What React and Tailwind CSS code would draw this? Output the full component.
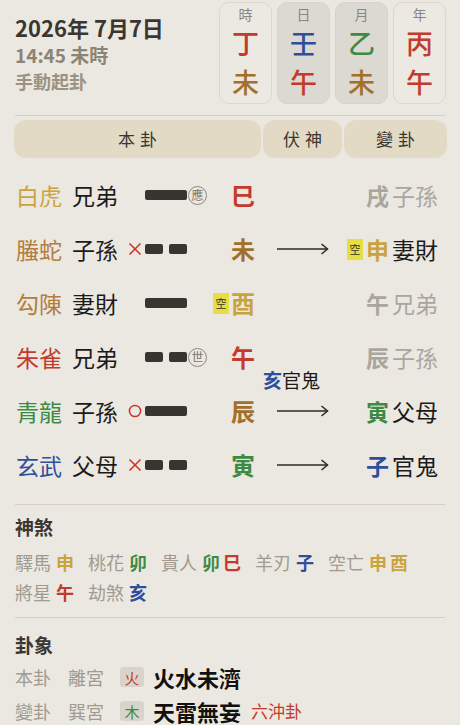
import React from "react";

const RED = "text-[#c23b2c]";
const BLUE = "text-[#2e4f9b]";
const GREEN = "text-[#3d8a43]";
const BROWN = "text-[#a2702a]";
const BROWN_L = "text-[#b27d3e]";
const GOLD = "text-[#c9a43c]";
const GRAY = "text-[#aaa69f]";

const pillars = [
  { label: "時", stem: "丁", stemColor: RED, branch: "未", branchColor: BROWN, dark: false },
  { label: "日", stem: "壬", stemColor: BLUE, branch: "午", branchColor: RED, dark: true },
  { label: "月", stem: "乙", stemColor: GREEN, branch: "未", branchColor: BROWN, dark: true },
  { label: "年", stem: "丙", stemColor: RED, branch: "午", branchColor: RED, dark: false },
];

const lines = [
  { god: "白虎", godColor: GOLD, rel: "兄弟", move: null, yang: true, mark: "應", branch: "巳", branchColor: RED, arrow: false, chg: { branch: "戌", rel: "子孫", gray: true } },
  { god: "螣蛇", godColor: BROWN_L, rel: "子孫", move: "x", yang: false, branch: "未", branchColor: BROWN, arrow: true, chg: { empty: true, branch: "申", color: GOLD, rel: "妻財" } },
  { god: "勾陳", godColor: BROWN_L, rel: "妻財", move: null, yang: true, empty: true, branch: "酉", branchColor: GOLD, arrow: false, chg: { branch: "午", rel: "兄弟", gray: true } },
  { god: "朱雀", godColor: RED, rel: "兄弟", move: null, yang: false, mark: "世", branch: "午", branchColor: RED, arrow: false, chg: { branch: "辰", rel: "子孫", gray: true } },
  { god: "青龍", godColor: GREEN, rel: "子孫", move: "o", yang: true, branch: "辰", branchColor: BROWN, fu: { branch: "亥", rel: "官鬼" }, arrow: true, chg: { branch: "寅", color: GREEN, rel: "父母" } },
  { god: "玄武", godColor: BLUE, rel: "父母", move: "x", yang: false, branch: "寅", branchColor: GREEN, arrow: true, chg: { branch: "子", color: BLUE, rel: "官鬼" } },
];

const shensha = [
  [
    { label: "驛馬", vals: [["申", GOLD]] },
    { label: "桃花", vals: [["卯", GREEN]] },
    { label: "貴人", vals: [["卯", GREEN], ["巳", RED]] },
    { label: "羊刃", vals: [["子", BLUE]] },
    { label: "空亡", vals: [["申", GOLD], ["酉", GOLD]] },
  ],
  [
    { label: "將星", vals: [["午", RED]] },
    { label: "劫煞", vals: [["亥", BLUE]] },
  ],
];

const EmptyBadge = () => (
  <span className="w-[16px] h-[21px] bg-[#e6de46] text-[11px] leading-none text-[#34321c] flex items-center justify-center">
    空
  </span>
);

const Arrow = () => (
  <svg width="52" height="12" viewBox="0 0 52 12" fill="none">
    <line x1="0" y1="6" x2="50.5" y2="6" stroke="#2b2926" strokeWidth="1.5" />
    <polyline points="44.5,1 50.5,6 44.5,11" stroke="#2b2926" strokeWidth="1.5" fill="none" />
  </svg>
);

const MoveMark = ({ type }) => {
  if (type === "x")
    return (
      <svg width="14" height="14" viewBox="0 0 14 14">
        <line x1="1.5" y1="1.5" x2="12.5" y2="12.5" stroke="#c8372c" strokeWidth="1.6" />
        <line x1="12.5" y1="1.5" x2="1.5" y2="12.5" stroke="#c8372c" strokeWidth="1.6" />
      </svg>
    );
  if (type === "o")
    return (
      <svg width="14" height="14" viewBox="0 0 14 14">
        <circle cx="7" cy="7" r="5.6" stroke="#c8372c" strokeWidth="1.5" fill="none" />
      </svg>
    );
  return null;
};

const LineRow = ({ l }) => (
  <div className="grid grid-cols-[247px_79px_103px] gap-x-[2px] h-[54px] items-center">
    <div className="flex items-center">
      <span className={`w-[58px] pl-[2px] text-[23px] leading-none ${l.godColor}`}>{l.god}</span>
      <span className="w-[52px] text-[23px] leading-none text-[#1c1b1a]">{l.rel}</span>
      <span className="w-[21px] flex justify-center items-center">
        <MoveMark type={l.move} />
      </span>
      <span className="w-[42px] h-[10px] flex justify-between">
        {l.yang ? (
          <span className="w-full h-full rounded-[2px] bg-[#38342f]" />
        ) : (
          <>
            <span className="w-[18px] h-full rounded-[2px] bg-[#38342f]" />
            <span className="w-[18px] h-full rounded-[2px] bg-[#38342f]" />
          </>
        )}
      </span>
      <span className="ml-[1px] w-[20px] flex items-center">
        {l.mark && (
          <span className="w-[19px] h-[19px] shrink-0 rounded-full border border-[#8d877e] text-[12px] leading-none text-[#7d776e] flex items-center justify-center">
            {l.mark}
          </span>
        )}
      </span>
      <span className="w-[47px] flex justify-end items-center gap-[2px]">
        {l.empty && <EmptyBadge />}
        <span className={`text-[24px] leading-none font-bold ${l.branchColor}`}>{l.branch}</span>
      </span>
    </div>
    <div className="relative h-full flex items-center justify-center">
      {l.arrow && <Arrow />}
      {l.fu && (
        <span className="absolute left-0 top-[-16px] text-[19px] leading-[24px] whitespace-nowrap">
          <span className={`font-semibold ${BLUE}`}>{l.fu.branch}</span>
          <span className="text-[#1c1b1a]">{l.fu.rel}</span>
        </span>
      )}
    </div>
    <div className="flex justify-end items-center gap-[3px] pr-[9px]">
      {l.chg.empty && <EmptyBadge />}
      <span className={`text-[23px] leading-none font-bold ${l.chg.gray ? GRAY : l.chg.color}`}>{l.chg.branch}</span>
      <span className={`text-[23px] leading-none ${l.chg.gray ? GRAY : "text-[#1c1b1a]"}`}>{l.chg.rel}</span>
    </div>
  </div>
);

const App = () => {
  return (
    <div className="w-[460px] h-[725px] overflow-hidden bg-[#ebe8e1] px-[14px] font-['Noto_Sans_CJK_TC',sans-serif]">
      {/* 日期與四柱 */}
      <div className="flex justify-between pt-[2px]">
        <div className="pt-[12px] pl-[1px]">
          <div className="text-[22px] leading-[27px] font-bold text-[#3a3630]">2026年 7月7日</div>
          <div className="text-[19px] leading-[27px] font-bold text-[#8c8474]">14:45 未時</div>
          <div className="text-[18px] leading-[27px] font-semibold text-[#9c9282]">手動起卦</div>
        </div>
        <div className="flex gap-[5px]">
          {pillars.map((p) => (
            <div
              key={p.label}
              className={`w-[53px] h-[102px] rounded-[10px] border flex flex-col items-center pt-[1px] ${
                p.dark ? "bg-[#dcd9d2] border-[#d7d3cb]" : "bg-[#ece9e3] border-[#dcd6cb]"
              }`}
            >
              <span className="text-[14px] leading-[20px] text-[#8a8680]">{p.label}</span>
              <span className={`mt-[3px] text-[27px] leading-[32px] font-medium ${p.stemColor}`}>{p.stem}</span>
              <span className={`mt-[7px] text-[27px] leading-[32px] font-medium ${p.branchColor}`}>{p.branch}</span>
            </div>
          ))}
        </div>
      </div>

      <div className="mt-[11px] ml-[1px] mr-[1px] border-t border-[#d6d0c4]" />

      {/* 表頭 */}
      <div className="mt-[4px] grid grid-cols-[247px_79px_103px] gap-x-[2px] h-[38px] text-[17px] text-[#3a3631] tracking-[0.3em]">
        <div className="rounded-[12px] bg-[#e3dac6] flex items-center justify-center pl-[0.3em]">本卦</div>
        <div className="rounded-[12px] bg-[#e3dac6] flex items-center justify-center pl-[0.3em]">伏神</div>
        <div className="rounded-[12px] bg-[#e3dac6] flex items-center justify-center pl-[0.3em]">變卦</div>
      </div>

      {/* 六爻 */}
      <div className="mt-[10px]">
        {lines.map((l, i) => (
          <LineRow key={i} l={l} />
        ))}
      </div>

      <div className="mt-[12px] ml-[1px] mr-[1px] border-t border-[#d6d0c4]" />

      {/* 神煞 */}
      <div className="mt-[10px] pl-[1px] text-[19px] leading-[24px] font-bold text-[#3b3833]">神煞</div>
      <div className="mt-[8px] pl-[1px]">
        {shensha.map((row, ri) => (
          <div key={ri} className="flex h-[30px] items-center text-[18px] leading-none">
            {row.map((s) => (
              <span key={s.label} className="flex items-center mr-[14px]">
                <span className="text-[#a09a90]">{s.label}</span>
                {s.vals.map(([v, c], vi) => (
                  <span key={vi} className={`font-bold ${c} ${vi === 0 ? "ml-[5px]" : "ml-[3px]"}`}>
                    {v}
                  </span>
                ))}
              </span>
            ))}
          </div>
        ))}
      </div>

      <div className="mt-[10px] ml-[1px] mr-[1px] border-t border-[#d6d0c4]" />

      {/* 卦象 */}
      <div className="mt-[15px] pl-[1px] text-[19px] leading-[24px] font-bold text-[#3b3833]">卦象</div>
      <div className="mt-[3px] pl-[1px]">
        <div className="flex h-[34px] items-center">
          <span className="w-[53px] text-[18px] text-[#a09a90]">本卦</span>
          <span className="w-[52px] text-[18px] text-[#a09a90]">離宮</span>
          <span className="w-[24px] h-[20px] rounded-[3px] bg-[#d9d4cb] text-[15px] leading-none flex items-center justify-center text-[#c23b2c]">火</span>
          <span className="ml-[9px] text-[22px] font-bold text-[#121110]">火水未濟</span>
        </div>
        <div className="flex h-[34px] items-center">
          <span className="w-[53px] text-[18px] text-[#a09a90]">變卦</span>
          <span className="w-[52px] text-[18px] text-[#a09a90]">巽宮</span>
          <span className="w-[24px] h-[20px] rounded-[3px] bg-[#d9d4cb] text-[15px] leading-none flex items-center justify-center text-[#3d8a43]">木</span>
          <span className="ml-[9px] text-[22px] font-bold text-[#121110]">天雷無妄</span>
          <span className="ml-[10px] text-[17px] text-[#c23b2c]">六沖卦</span>
        </div>
      </div>
    </div>
  );
};

export default App;
